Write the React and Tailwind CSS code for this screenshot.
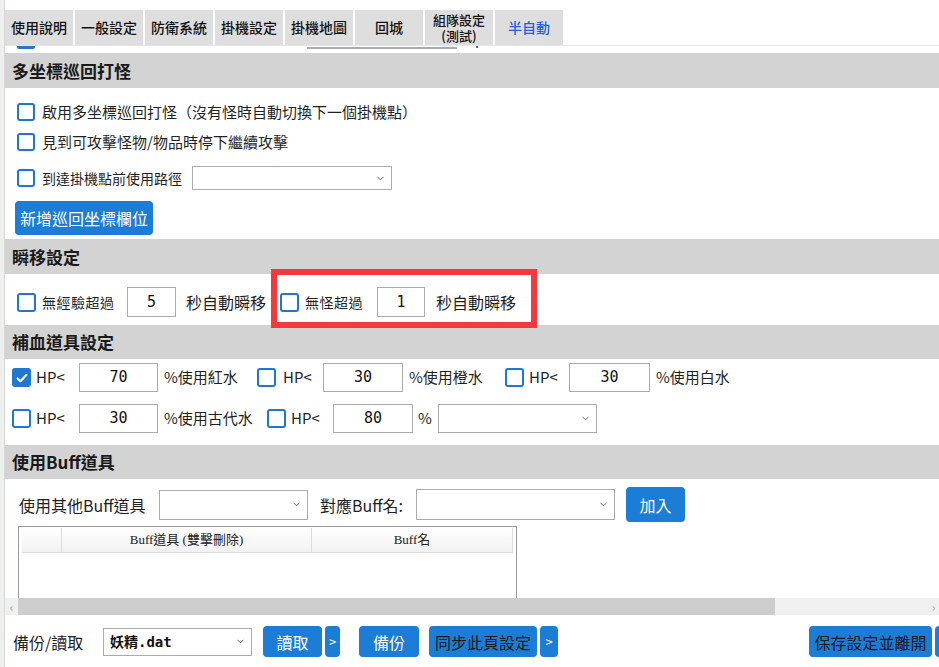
import clsx from 'clsx';

const tabs = ['使用說明', '一般設定', '防衛系統', '掛機設定', '掛機地圖', '回城', '組隊設定\n(測試)', '半自動'];

const Box = ({ checked, size = 'w-[19px] h-[19px]' }) => (
  <span
    className={clsx(
      'shrink-0 rounded-[3px] border-2 border-[#1f77cf] flex items-center justify-center',
      size,
      checked ? 'bg-[#1f77cf]' : 'bg-white'
    )}
  >
    {checked && (
      <svg viewBox="0 0 16 16" className="w-[14px] h-[14px]" fill="none" stroke="white" strokeWidth="2.4" strokeLinecap="round" strokeLinejoin="round">
        <path d="M3 8.5l3.2 3.2L13 4.5" />
      </svg>
    )}
  </span>
);

const NumBox = ({ value, w = 'w-[80px]', h = 'h-[29px]' }) => (
  <div className={clsx('shrink-0 border border-[#ababab] bg-white flex items-center justify-center text-[15px] text-[#111] font-["DejaVu_Sans_Mono",monospace]', w, h)}>
    {value}
  </div>
);

const Select = ({ className, children }) => (
  <div className={clsx('shrink-0 border border-[#ababab] bg-white flex items-center justify-between pl-[6px] pr-[7px]', className)}>
    <span>{children}</span>
    <svg viewBox="0 0 8 5" className="w-[7px] h-[5px]" fill="none" stroke="#666" strokeWidth="1.1">
      <path d="M0.5 0.5L4 4L7.5 0.5" />
    </svg>
  </div>
);

const Header = ({ children, h = 'h-[35px]' }) => (
  <div className={clsx('bg-[#d3d3d3] flex items-center pl-[7px] text-[17px] font-bold text-[#1a1a1a]', h)}>{children}</div>
);

const BlueBtn = ({ children, className }) => (
  <button className={clsx('shrink-0 bg-[#1c7dd6] rounded-[4px] flex items-center justify-center', className)}>{children}</button>
);

export default function App() {
  return (
    <div className="w-[939px] h-[667px] overflow-hidden bg-white flex relative font-['Noto_Sans_CJK_TC',sans-serif] text-[#1f1f1f]">
      {/* window edge behind the panel */}
      <div className="w-[5px] shrink-0 bg-[#eef0ee] border-r border-[#d8d8d8]" />

      <div className="flex-1 flex flex-col min-w-0">
        {/* tab strip */}
        <div className="mt-[10px] h-[35px] flex gap-[2px]">
          {tabs.map((t) => (
            <div
              key={t}
              className={clsx(
                'w-[68px] bg-[#dedede] flex items-center justify-center text-center whitespace-pre-line font-medium',
                t.includes('\n') ? 'text-[13px] leading-[16px]' : 'text-[14px]',
                t === '半自動' ? 'text-[#1f5fe6]' : 'text-[#111]'
              )}
            >
              {t}
            </div>
          ))}
        </div>

        {/* bottom edge of the row scrolled above */}
        <div className="h-[8px] border-t border-[#e6e6e6] relative overflow-hidden">
          <div className="flex">
            <div className="ml-[12px] w-[18px] h-[3px] bg-[#1f77cf] rounded-b-[2px]" />
            <div className="ml-[272px] w-[150px] h-[3px] border-b-2 border-[#aaa]" />
            <div className="ml-[19px] w-[2px] h-[2px] bg-[#e33]" />
          </div>
        </div>

        <Header>多坐標巡回打怪</Header>
        <div className="h-[151px] pl-[12px] pt-[12px] flex flex-col">
          <div className="h-[24px] flex items-center gap-[7px] text-[15px]">
            <Box size="w-[18px] h-[18px]" />
            <span>啟用多坐標巡回打怪（沒有怪時自動切換下一個掛機點）</span>
          </div>
          <div className="mt-[6px] h-[24px] flex items-center gap-[7px] text-[15px]">
            <Box size="w-[18px] h-[18px]" />
            <span>見到可攻擊怪物/物品時停下繼續攻擊</span>
          </div>
          <div className="mt-[12px] h-[24px] flex items-center text-[14px]">
            <Box size="w-[18px] h-[18px]" />
            <span className="ml-[7px]">到達掛機點前使用路徑</span>
            <Select className="ml-[10px] w-[200px] h-[24px]" />
          </div>
          <BlueBtn className="mt-[11px] -ml-[2px] w-[138px] h-[34px] text-white text-[16px]">新增巡回坐標欄位</BlueBtn>
        </div>

        <Header>瞬移設定</Header>
        <div className="h-[51px] pl-[12px] pt-[13px]">
          <div className="h-[30px] flex items-center">
            <Box />
            <span className="ml-[6px] w-[85px] text-[14px] tracking-[0.5px]">無經驗超過</span>
            <NumBox value="5" w="w-[49px]" h="h-[30px]" />
            <span className="ml-[10px] w-[80px] text-[16px]">秒自動瞬移</span>
            <span className="ml-[14px]"><Box /></span>
            <span className="ml-[6px] w-[72px] text-[14px] tracking-[0.5px]">無怪超過</span>
            <NumBox value="1" w="w-[48px]" h="h-[30px]" />
            <span className="ml-[11px] text-[16px]">秒自動瞬移</span>
          </div>
        </div>

        <Header h="h-[34px]">補血道具設定</Header>
        <div className="h-[86px] pl-[7px] pt-[4px] flex flex-col text-[15px]">
          <div className="h-[29px] flex items-center">
            <div className="w-[245px] flex items-center">
              <Box checked />
              <span className="ml-[5px] w-[43px]">HP&lt;</span>
              <NumBox value="70" w="w-[79px]" />
              <span className="ml-[6px]">%使用紅水</span>
            </div>
            <div className="w-[248px] flex items-center">
              <Box />
              <span className="ml-[7px] w-[40px]">HP&lt;</span>
              <NumBox value="30" />
              <span className="ml-[6px]">%使用橙水</span>
            </div>
            <div className="flex items-center">
              <Box />
              <span className="ml-[5px] w-[40px]">HP&lt;</span>
              <NumBox value="30" w="w-[81px]" />
              <span className="ml-[6px]">%使用白水</span>
            </div>
          </div>
          <div className="mt-[12px] h-[29px] flex items-center">
            <div className="w-[255px] flex items-center">
              <Box />
              <span className="ml-[5px] w-[43px]">HP&lt;</span>
              <NumBox value="30" w="w-[79px]" />
              <span className="ml-[6px]">%使用古代水</span>
            </div>
            <Box />
            <span className="ml-[5px] w-[42px]">HP&lt;</span>
            <NumBox value="80" />
            <span className="ml-[5px] w-[14px]">%</span>
            <Select className="ml-[6px] w-[159px] h-[29px]" />
          </div>
        </div>

        <Header h="h-[34px]">使用Buff道具</Header>
        <div className="h-[119px] pt-[8px] flex flex-col">
          <div className="h-[35px] flex items-center pl-[14px] text-[16px]">
            <span className="w-[140px]">使用其他Buff道具</span>
            <Select className="w-[149px] h-[30px]" />
            <span className="ml-[12px] w-[96px]">對應Buff名:</span>
            <Select className="w-[199px] h-[31px]" />
            <BlueBtn className="ml-[11px] w-[59px] h-[35px] text-white text-[16px]">加入</BlueBtn>
          </div>
          <div className="mt-[4px] ml-[13px] w-[499px] flex-1 border border-b-0 border-[#9a9a9a] px-[3px] pt-[1px] overflow-hidden">
            <div className="h-[25px] flex border-b border-[#dcdcdc] bg-gradient-to-b from-white to-[#f1f1f1] font-['Liberation_Serif','Noto_Sans_CJK_TC',serif] text-[13px] text-[#222]">
              <div className="w-[40px] border-r border-[#dcdcdc]" />
              <div className="w-[250px] border-r border-[#dcdcdc] flex items-center justify-center">Buff道具 (雙擊刪除)</div>
              <div className="flex-1 border-r border-[#dcdcdc] flex items-center justify-center">Buff名</div>
            </div>
          </div>
        </div>

        {/* horizontal scrollbar */}
        <div className="h-[17px] flex bg-[#f0f0f0] text-[#a0a0a0] text-[12px]">
          <div className="w-[13px] flex items-center justify-center">‹</div>
          <div className="w-[757px] bg-[#cdcdcd]" />
          <div className="flex-1" />
          <div className="w-[11px] flex items-center justify-center">›</div>
        </div>

        {/* backup / load bar */}
        <div className="h-[52px] pt-[11px] pl-[8px] flex items-start text-[16px]">
          <div className="h-[31px] flex items-center">
            <span className="w-[90px]">備份/讀取</span>
            <Select className="w-[149px] h-[28px] font-bold text-[14px] text-[#111] pl-[4px]">
              <span className="font-['Noto_Sans_CJK_TC',sans-serif]">妖精</span>
              <span className="font-['DejaVu_Sans_Mono',monospace]">.dat</span>
            </Select>
            <BlueBtn className="ml-[11px] w-[59px] h-[31px] text-white">讀取</BlueBtn>
            <BlueBtn className="ml-[3px] w-[15px] h-[31px] text-white text-[13px]">&gt;</BlueBtn>
            <BlueBtn className="ml-[19px] w-[60px] h-[31px] text-white">備份</BlueBtn>
            <BlueBtn className="ml-[10px] w-[108px] h-[31px] text-[#1a1a1a]">同步此頁設定</BlueBtn>
            <BlueBtn className="ml-[3px] w-[18px] h-[31px] text-white text-[13px]">&gt;</BlueBtn>
            <BlueBtn className="ml-[251px] w-[123px] h-[31px] text-[#1a1a1a]">保存設定並離開</BlueBtn>
            <BlueBtn className="ml-[3px] w-[20px] h-[31px]" />
          </div>
        </div>
      </div>

      {/* highlight frame around the no-monster teleport option */}
      <div className="absolute left-[271px] top-[269px] w-[266px] h-[59px] border-[6px] border-[#f4383b] pointer-events-none" />
    </div>
  );
}
